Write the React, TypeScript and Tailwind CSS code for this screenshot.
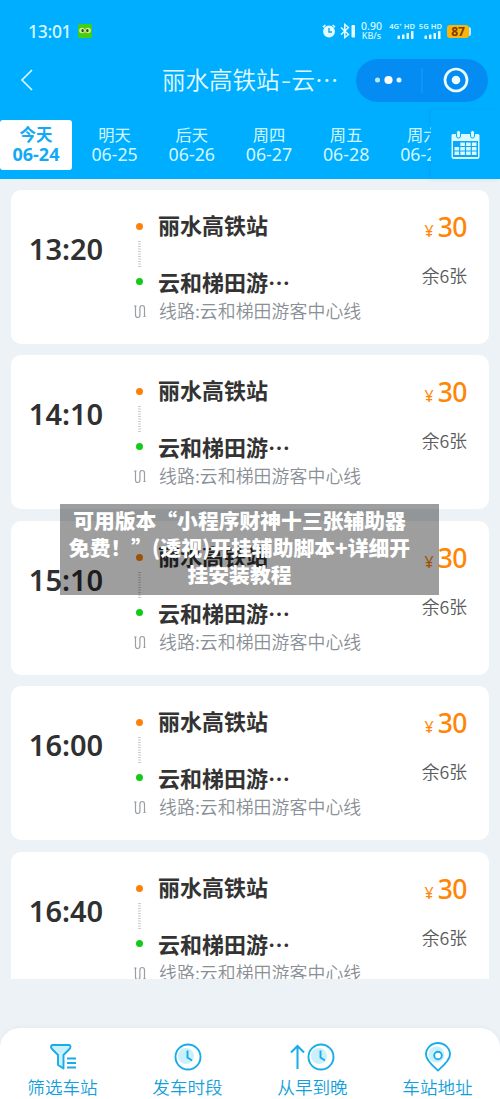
import React from 'react';

const cjk = "font-['Noto_Sans_CJK_SC',sans-serif]";
const latin = "font-['Noto_Sans','Noto_Sans_CJK_SC',sans-serif]";

function StatusBar() {
  return (
    <div className="flex h-[50px] shrink-0 items-start pt-[21px] pl-[28px] pr-[29px] text-[#d8f8ff]">
      <span className={`${latin} h-5 w-[44px] text-[17.5px] font-medium leading-5 tracking-[-0.3px] whitespace-nowrap`}>13:01</span>
      <svg className="mt-[3px] ml-[6px] h-[14px] w-[14px]" viewBox="0 0 14 14">
        <rect width="14" height="14" rx="1.5" fill="#43cf12" />
        <circle cx="4" cy="6.5" r="2.8" fill="#c6f49a" />
        <circle cx="10" cy="6.5" r="2.8" fill="#c6f49a" />
        <ellipse cx="4.6" cy="6.6" rx="1.2" ry="1.7" fill="#38452a" />
        <ellipse cx="9.4" cy="6.6" rx="1.2" ry="1.7" fill="#38452a" />
        <path d="M6 8h2l-1 2z" fill="#f5a623" />
      </svg>
      <div className="grow" />
      <svg className="mt-[2px] h-[16px] w-[34px]" viewBox="0 0 34 16">
        <circle cx="7" cy="8.5" r="5.9" fill="#e4fbff" />
        <path d="M1 4.2 3.4 2M13 4.2 10.6 2" stroke="#e4fbff" strokeWidth="1.6" />
        <path d="M7 5v4h3" fill="none" stroke="#0aa5f0" strokeWidth="1.4" />
        <path d="m19 4.500 7.500 7L22.800 14.500V1.500l3.700 3L19 11.500" fill="none" stroke="#e4fbff" strokeWidth="1.500" />
        <rect x="29.500" y="2" width="3.500" height="12.500" rx="1" fill="#e4fbff" />
      </svg>
      <div className={`${latin} ml-[4px] flex w-[23px] flex-col items-center pt-[1px] font-medium whitespace-nowrap`}>
        <span className="h-[9px] text-[10.5px] leading-[9px]">0.90</span>
        <span className="h-[9px] text-[9px] leading-[9px]">KB/s</span>
      </div>
      <Signal label="4G⁺ HD" className="ml-[5px] w-[27px]" />
      <Signal label="5G HD" className="ml-[3px] w-[24px]" />
      <div className="mt-[4px] ml-[5px] flex items-center">
        <div className={`${latin} flex h-[13px] w-[22px] items-center justify-center rounded-[3px] bg-[#fbb408] text-[12px] font-bold leading-none text-[#773c08]`}>87</div>
        <div className="h-[9px] w-[2px] rounded-r bg-[#b9ecff]" />
      </div>
    </div>
  );
}

function Signal({ label, className }: { label: string; className: string }) {
  return (
    <div className={`flex flex-col items-end pt-[1px] ${className}`}>
      <span className={`${latin} h-[8px] text-[7.6px] font-semibold leading-[8px] whitespace-nowrap`}>{label}</span>
      <svg className="mt-[1px] h-[8px] w-[18px]" viewBox="0 0 18 8" fill="#e4fbff">
        <rect x="0.500" y="4.500" width="2.500" height="3.500" rx=".5" />
        <rect x="5" y="3.500" width="2.500" height="4.500" rx=".5" />
        <rect x="9.500" y="2" width="2.500" height="6" rx=".5" />
        <rect x="14" y="0" width="2.500" height="8" rx=".5" />
      </svg>
    </div>
  );
}

function TitleBar() {
  return (
    <div className="flex h-[60px] shrink-0 items-center pl-[20px] pr-[12px]">
      <svg className="h-[24px] w-[14px]" viewBox="0 0 14 24">
        <path d="M12 2 2 12l10 10" fill="none" stroke="#d5f7ff" strokeWidth="1.700" />
      </svg>
      <div className={`${cjk} ml-[128px] flex h-[30px] w-[194px] items-center pb-[2px] text-[23.5px] leading-[30px] font-[350] whitespace-nowrap text-[#e2faff]`}>
        <span>丽水高铁站</span>
        <span className="flex w-[12px] scale-x-125 justify-center">-</span>
        <span>云…</span>
      </div>
      <div className="flex h-[43px] w-[132px] shrink-0 items-center rounded-full bg-[#048cf2]">
        <svg className="h-[43px] w-[132px]" viewBox="0 0 132 43">
          <circle cx="21.500" cy="21" r="2.500" fill="#b9e9ff" />
          <circle cx="32.500" cy="21" r="4.100" fill="white" />
          <circle cx="43" cy="21" r="2.500" fill="#e0f7ff" />
          <path d="M66 9v25" stroke="#249bf2" />
          <circle cx="100" cy="21" r="11" fill="none" stroke="#eafcff" strokeWidth="2.700" />
          <circle cx="100" cy="21" r="4.300" fill="#f0fdff" />
        </svg>
      </div>
    </div>
  );
}

const days = [
  ['明天', '06-25'],
  ['后天', '06-26'],
  ['周四', '06-27'],
  ['周五', '06-28'],
  ['周六', '06-29'],
];

function DateTabs() {
  return (
    <div className="flex h-[69px] shrink-0">
      <div className="flex w-[431px] overflow-hidden pt-[10px]">
        <div className="flex h-[50px] w-[72px] shrink-0 flex-col items-center rounded-[3px] bg-white pt-[4px] text-[#12a9f5]">
          <span className={`${cjk} h-5 text-[16.5px] font-bold leading-5`}>今天</span>
          <span className={`${latin} h-5 text-[18px] font-bold leading-5 whitespace-nowrap`}>06-24</span>
        </div>
        <div className="flex pl-[4px]">
          {days.map(([name, date]) => (
            <div key={date} className="flex w-[77.2px] shrink-0 flex-col items-center pt-[4px] text-[#d2f8ff]">
              <span className={`${cjk} h-5 text-[16.3px] leading-5`}>{name}</span>
              <span className={`${latin} h-5 text-[17.8px] leading-5 whitespace-nowrap`}>{date}</span>
            </div>
          ))}
        </div>
      </div>
      <div className="flex grow items-start pt-[20px] pl-[20px] shadow-[-2px_0_4px_rgba(0,130,230,0.18)]">
        <svg className="h-[30px] w-[29px]" viewBox="0 0 29 30">
          <path d="M2 4h25q1.500 0 1.500 1.500v21q0 2.500-2.500 2.500H3Q.5 29 .5 26.500v-21Q.5 4 2 4z" fill="#d9f9ff" />
          <path d="M2 11h25v16H2z" fill="#08a9fa" />
          <rect x="5.500" y=".5" width="4" height="7.500" rx="1.900" fill="#d9f9ff" stroke="#00aeff" />
          <rect x="19.500" y=".5" width="4" height="7.500" rx="1.900" fill="#d9f9ff" stroke="#00aeff" />
          <g fill="#d9f9ff">
            {[0, 1, 2].map((r) =>
              [0, 1, 2, 3].map((c) =>
                r === 0 && c === 0 ? null : <rect key={`${r}${c}`} x={3.5 + c * 5.8} y={12.5 + r * 4.5} width="4.600" height="3.500" />
              )
            )}
          </g>
        </svg>
      </div>
    </div>
  );
}

function TripCard({ time }: { time: string }) {
  return (
    <div className="flex h-[154px] shrink-0 rounded-[10px] bg-white">
      <div className={`${latin} flex h-[36px] w-[110px] justify-center pt-[41px] text-[29px] leading-[36px] font-semibold text-[#303030]`}>{time}</div>
      <div className="flex w-[37px] flex-col items-center pr-[1px] pl-[1px] pt-[33px]">
        <div className="h-[7px] w-[7px] rounded-full bg-[#ff8208]" />
        <svg className="mt-[11px] h-[27px] w-[3px]" viewBox="0 0 3 27">
          <path d="M1.500 0v27" stroke="#c4c4c4" strokeWidth="2.500" strokeDasharray="1 1.500" />
        </svg>
        <div className="mt-[10px] h-[7px] w-[7px] rounded-full bg-[#12ca19]" />
        <svg className="mt-[18px] h-[18px] w-[14px]" viewBox="0 0 14 18" fill="none" stroke="#999ea3" strokeWidth="1.200">
          <path d="M2.500 3v9q0 2.500 2.200 2.500t2.200-2.500V5q0-2.500 2.300-2.500t2.300 2.500v9" />
          <path d="M1 3h2.500M10.500 13.500h2" />
        </svg>
      </div>
      <div className={`${cjk} flex w-[230px] flex-col whitespace-nowrap text-[#333]`}>
        <div className="mt-[18px] h-[32px] text-[22px] leading-[32px] font-bold">丽水高铁站</div>
        <div className="mt-[25px] h-[32px] text-[22px] leading-[32px] font-bold">云和梯田游…</div>
        <div className="h-[26px] pl-px text-[17.85px] leading-[26px] font-[350] tracking-[0.1px] text-[#8a9096]">线路:云和梯田游客中心线</div>
      </div>
      <div className="flex grow flex-col items-end pr-[22px]">
        <div className="mt-[19px] flex h-[36px] items-baseline whitespace-nowrap text-[#ff8505]">
          <span className={`${latin} mr-[4px] text-[16px] leading-[36px]`}>¥</span>
          <span className={`${latin} text-[26.5px] leading-[36px] font-medium tracking-[-0.5px]`}>30</span>
        </div>
        <div className={`${cjk} mt-[17px] h-[26px] text-[17.8px] leading-[26px] font-[350] whitespace-nowrap text-[#5c5c5c]`}>余6张</div>
      </div>
    </div>
  );
}

function Clock() {
  return (
    <svg className="h-[30px] w-[28px]" viewBox="0 0 28 30" fill="none" stroke="#19ace8" strokeWidth="1.900">
      <circle cx="14" cy="15" r="12.500" />
      <circle cx="12" cy="14" r="8" fill="#caf0fc" stroke="none" />
      <path d="M13.500 8.500v7l4.500 3" />
    </svg>
  );
}

function Tool({ label, children }: { label: string; children: React.ReactNode }) {
  return (
    <div className="flex w-1/4 flex-col items-center pt-[13px]">
      <div className="flex h-[31px] items-center">{children}</div>
      <span className={`${cjk} mt-[2px] h-[26px] text-[17.6px] leading-[26px] font-[350] whitespace-nowrap text-[#149fdc]`}>{label}</span>
    </div>
  );
}

function BottomBar() {
  return (
    <div className="flex h-[72px] shrink-0 rounded-t-[20px] bg-white shadow-[0_-1px_5px_rgba(0,0,0,0.04)]">
      <Tool label="筛选车站">
        <svg className="h-[30px] w-[28px]" viewBox="0 0 28 30" fill="none" stroke="#19ace8" strokeWidth="1.900" strokeLinejoin="round">
          <path d="M3 3h17.500q2 1.500 0 4L14.500 13v13.500L9 23V13L3 7Q1 5 3 3z" fill="#caf0fc" />
          <path d="M18 16.500h9M18 21h9M18 25.500h9" />
        </svg>
      </Tool>
      <Tool label="发车时段"><Clock /></Tool>
      <Tool label="从早到晚">
        <svg className="mr-[2px] h-[30px] w-[15px]" viewBox="0 0 15 30" fill="none" stroke="#19ace8" strokeWidth="2">
          <path d="M7.500 27V4M1 10.500 7.500 4l6.500 6.500" />
        </svg>
        <Clock />
      </Tool>
      <Tool label="车站地址">
        <svg className="h-[30px] w-[28px]" viewBox="0 0 28 30" fill="none" stroke="#19ace8" strokeWidth="1.900">
          <path d="M14 28.500C9.500 24.500 2 18.500 2 12.500a12 11.500 0 0 1 24 0c0 6-7.500 12-12 16z" strokeLinejoin="round" />
          <circle cx="12.500" cy="12.500" r="8" fill="#caf0fc" stroke="none" />
          <circle cx="14" cy="13.500" r="3.800" fill="white" />
        </svg>
      </Tool>
    </div>
  );
}

export default function App() {
  return (
    <div lang="zh-CN" className="relative flex h-[1099px] w-[500px] flex-col overflow-hidden bg-[#edf2f6]">
      <header className="flex h-[179px] shrink-0 flex-col bg-[#00aeff]">
        <StatusBar />
        <TitleBar />
        <DateTabs />
      </header>
      <main className="flex h-[800px] shrink-0 flex-col gap-[11.4px] overflow-hidden px-[11px] pt-[11px]">
        {['13:20', '14:10', '15:10', '16:00', '16:40'].map((t) => (
          <TripCard key={t} time={t} />
        ))}
      </main>
      <div className="h-[49px] shrink-0" />
      <BottomBar />
      <div className={`${cjk} absolute top-[504px] left-[60px] flex h-[91px] w-[379px] flex-col items-center bg-black/38 pt-[3px] pr-[20px] text-[20.8px] leading-[27px] font-black whitespace-nowrap text-white`}>
        <div>可用版本“小程序财神十三张辅助器</div>
        <div>免费！”(透视)开挂辅助脚本+详细开</div>
        <div>挂安装教程</div>
      </div>
    </div>
  );
}
